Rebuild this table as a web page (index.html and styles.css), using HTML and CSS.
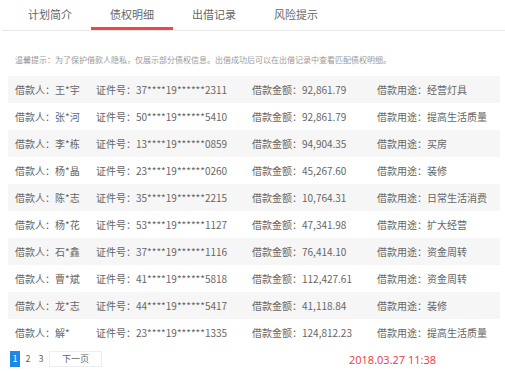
FILE: index.html
```html
<!DOCTYPE html>
<html lang="zh">
<head>
<meta charset="utf-8">
<link rel="stylesheet" href="styles.css">
</head>
<body>
<div class="page">
  <nav class="tabs">
    <div class="tab">计划简介</div>
    <div class="tab active">债权明细</div>
    <div class="tab">出借记录</div>
    <div class="tab">风险提示</div>
  </nav>
  <p class="hint">温馨提示：为了保护借款人隐私，仅展示部分债权信息。出借成功后可以在出借记录中查看匹配债权明细。</p>
  <div class="list">
    <div class="row"><span class="c1">借款人：王*宇</span><span class="c2">证件号：37****19******2311</span><span class="c3">借款金额：92,861.79</span><span class="c4">借款用途：经营灯具</span></div>
    <div class="row"><span class="c1">借款人：张*河</span><span class="c2">证件号：50****19******5410</span><span class="c3">借款金额：92,861.79</span><span class="c4">借款用途：提高生活质量</span></div>
    <div class="row"><span class="c1">借款人：李*栋</span><span class="c2">证件号：13****19******0859</span><span class="c3">借款金额：94,904.35</span><span class="c4">借款用途：买房</span></div>
    <div class="row"><span class="c1">借款人：杨*晶</span><span class="c2">证件号：23****19******0260</span><span class="c3">借款金额：45,267.60</span><span class="c4">借款用途：装修</span></div>
    <div class="row"><span class="c1">借款人：陈*志</span><span class="c2">证件号：35****19******2215</span><span class="c3">借款金额：10,764.31</span><span class="c4">借款用途：日常生活消费</span></div>
    <div class="row"><span class="c1">借款人：杨*花</span><span class="c2">证件号：53****19******1127</span><span class="c3">借款金额：47,341.98</span><span class="c4">借款用途：扩大经营</span></div>
    <div class="row"><span class="c1">借款人：石*鑫</span><span class="c2">证件号：37****19******1116</span><span class="c3">借款金额：76,414.10</span><span class="c4">借款用途：资金周转</span></div>
    <div class="row"><span class="c1">借款人：曹*斌</span><span class="c2">证件号：41****19******5818</span><span class="c3">借款金额：112,427.61</span><span class="c4">借款用途：资金周转</span></div>
    <div class="row"><span class="c1">借款人：龙*志</span><span class="c2">证件号：44****19******5417</span><span class="c3">借款金额：41,118.84</span><span class="c4">借款用途：装修</span></div>
    <div class="row"><span class="c1">借款人：解*</span><span class="c2">证件号：23****19******1335</span><span class="c3">借款金额：124,812.23</span><span class="c4">借款用途：提高生活质量</span></div>
  </div>
  <div class="footer">
    <div class="pager">
      <span class="pg current">1</span>
      <span class="pg">2</span>
      <span class="pg">3</span>
      <span class="next">下一页</span>
    </div>
    <div class="date">2018.03.27 11:38</div>
  </div>
</div>
</body>
</html>
```

FILE: styles.css
```css
* { box-sizing: border-box; }
html, body { margin: 0; padding: 0; background: #fff; }
body {
  font-family: "Noto Sans CJK SC", "Open Sans", sans-serif;
  color: #666;
  width: 505px;
  height: 371px;
  overflow: hidden;
}
.tabs {
  display: flex;
  height: 31px;
  margin: 0 0 0 2px;
  padding-left: 7px;
  border-bottom: 1px solid #e8e8e8;
}
.tab {
  width: 82px;
  height: 30px;
  text-align: center;
  font-size: 11px;
  color: #666;
  border-bottom: 3px solid transparent;
  line-height: 28px;
}
.tab.active { border-bottom-color: #f04848; }
.hint {
  margin: 23px 0 0 15px;
  font-size: 8px;
  line-height: 12px;
  color: #999;
}
.list {
  margin: 10px 5px 0 8px;
}
.row {
  display: flex;
  height: 27px;
  align-items: center;
  font-size: 10px;
  color: #666;
  padding-left: 7px;
}
.row:nth-child(odd) { background: #f6f6f6; }
.c1 { width: 81px; }
.c2 { width: 156px; }
.c3 { width: 125px; }
.c4 { flex: 1; }
.footer {
  display: flex;
  align-items: center;
  margin-top: 5px;
  padding-left: 10px;
  height: 16px;
}
.pager {
  display: flex;
  align-items: center;
  gap: 3px;
  font-size: 9px;
}
.pg {
  width: 10px;
  height: 16px;
  line-height: 16px;
  text-align: center;
  color: #666;
}
.pg.current { background: #1e88e5; color: #fff; }
.next {
  width: 53px;
  height: 16px;
  line-height: 14px;
  text-align: center;
  border: 1px solid #eee;
  color: #666;
  font-size: 9px;
}
.date {
  margin-left: 247px;
  color: #e83a3a;
  font-size: 11px;
  font-family: "Open Sans", sans-serif;
}
```
